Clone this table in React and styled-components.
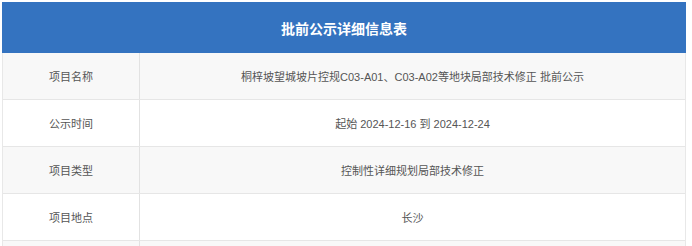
import React from "react";
import styled, { createGlobalStyle } from "styled-components";

const Global = createGlobalStyle`
  html, body { margin: 0; padding: 0; background: #ffffff; }
  body { font-family: "Liberation Sans", "Noto Sans CJK SC", sans-serif; }
`;

const Page = styled.div`
  padding: 2px 6px 0 2px;
`;

const Table = styled.div`
  display: flex;
  flex-direction: column;
  border-left: 1px solid #e8e8e8;
  border-right: 1px solid #e8e8e8;
`;

const Header = styled.div`
  height: 51px;
  background: #3473c0;
  color: #ffffff;
  font-size: 14px;
  font-weight: bold;
  display: flex;
  align-items: center;
  justify-content: center;
  margin: 0 -1px;
`;

const Row = styled.div`
  display: grid;
  grid-template-columns: 136px 1fr;
  height: 46px;
  border-bottom: 1px solid #e6e6e6;
  background: ${(p) => (p.$shade ? "#f8f8f8" : "#ffffff")};
`;

const Cell = styled.div`
  display: flex;
  align-items: center;
  justify-content: center;
  font-size: 11px;
  color: #555555;
  border-left: ${(p) => (p.$divider ? "1px solid #e2e2e2" : "none")};
`;

const rows = [
  ["项目名称", "桐梓坡望城坡片控规C03-A01、C03-A02等地块局部技术修正 批前公示"],
  ["公示时间", "起始 2024-12-16 到 2024-12-24"],
  ["项目类型", "控制性详细规划局部技术修正"],
  ["项目地点", "长沙"],
  ["", ""],
];

export default function App() {
  return (
    <Page>
      <Global />
      <Table>
        <Header>批前公示详细信息表</Header>
        {rows.map(([k, v], i) => (
          <Row key={i} $shade={i % 2 === 0}>
            <Cell>{k}</Cell>
            <Cell $divider>{v}</Cell>
          </Row>
        ))}
      </Table>
    </Page>
  );
}
